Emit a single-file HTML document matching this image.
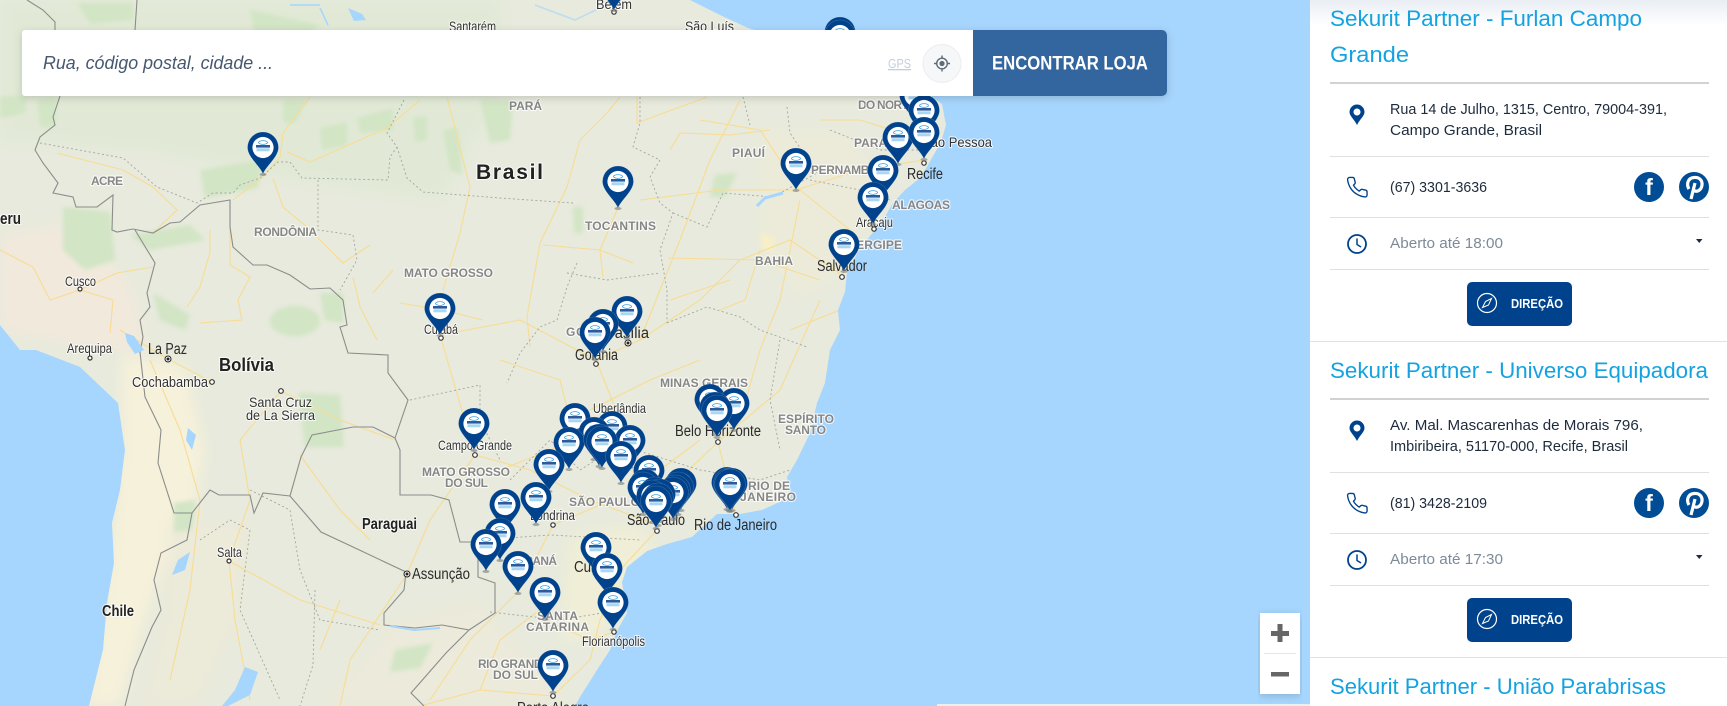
<!DOCTYPE html>
<html lang="pt"><head><meta charset="utf-8"><title>Sekurit Partner</title>
<style>
html,body{margin:0;padding:0;width:1727px;height:706px;overflow:hidden;background:#fff}
svg{display:block}
text{font-family:"Liberation Sans",sans-serif}
.c,.r,.k{paint-order:stroke;stroke:#fff;stroke-width:2.2px;stroke-opacity:.75;stroke-linejoin:round}
.c{fill:#333;font-size:14px}
.l{font-size:15.5px;fill:#2a2a2a}
.r{fill:#868686;font-size:12px;font-weight:bold}
.k{fill:#222;font-size:17px;font-weight:bold}
.t{fill:#14a3e0;font-size:22px}
.a{fill:#1d2b3c;font-size:15px}
.o{fill:#7d8a99;font-size:15px}
.d{fill:#fff;font-size:13px;font-weight:bold}
.dot{fill:#fff;stroke:#333;stroke-width:1.2}
.rd{fill:none;stroke:#f8dc93;stroke-width:1.1}
.st{fill:none;stroke:#a3a6a0;stroke-width:.9;stroke-dasharray:2 2.5}
.bd{fill:none;stroke:#8b8d8b;stroke-width:1.1}
</style></head><body>
<svg width="1727" height="706" viewBox="0 0 1727 706" xmlns="http://www.w3.org/2000/svg">
<defs>
<clipPath id="land"><path d="M0,0H690L720,15L748,28L800,42L850,60L885,78L925,92L942,104L946,125L941,142L928,165L920,178L905,190L893,203L882,222L870,236L858,252L847,272L845,292L838,310L840,330L830,350L825,383L817,403L810,433L797,460L787,477L791,497L762,510L740,514L717,514L692,537L667,544L647,551L627,567L622,582L627,613L617,631L610,650L597,670L580,697L575,706H89L103,650L107,603L114,563L112,523L120,490L125,450L118,403L80,367L36,350L20,350L0,325Z"/></clipPath>
<filter id="b1" x="-20%" y="-20%" width="140%" height="140%"><feGaussianBlur stdDeviation="2"/></filter>
<filter id="b2" x="-30%" y="-30%" width="160%" height="160%"><feGaussianBlur stdDeviation="7"/></filter>
<filter id="sh" x="-5%" y="-30%" width="110%" height="160%"><feDropShadow dx="0" dy="2" stdDeviation="4" flood-color="#000" flood-opacity=".16"/></filter>
<linearGradient id="tg" x1="0" y1="0" x2="0" y2="1"><stop offset="0" stop-color="#e9eef4"/><stop offset="1" stop-color="#fff"/></linearGradient>
<g id="p">
<ellipse cx="0" cy="0.500" rx="3.500" ry="1.500" fill="#777" fill-opacity=".6"/>
<path d="M0,0C-3,-8 -15.5,-17 -15.5,-26.5A15.5,15.5 0 1 1 15.5,-26.5C15.5,-17 3,-8 0,0Z" fill="#00438c" stroke="#fff" stroke-opacity=".22" stroke-width=".6"/>
<circle cx="0" cy="-26.5" r="10.6" fill="#fff"/>
<ellipse cx="0" cy="-31.500" rx="4.500" ry="1.800" fill="none" stroke="#1c8fd6" stroke-width=".7"/>
<rect x="-7" y="-29" width="14" height="2.600" fill="#2d5a9c"/>
<rect x="-6.500" y="-25.700" width="13" height="3" fill="#a6d8f3"/>
</g>
<g id="ph"><path d="M22 16.92v3a2 2 0 0 1-2.18 2 19.79 19.79 0 0 1-8.63-3.07 19.5 19.5 0 0 1-6-6 19.79 19.79 0 0 1-3.07-8.67A2 2 0 0 1 4.11 2h3a2 2 0 0 1 2 1.72 12.84 12.84 0 0 0 .7 2.81 2 2 0 0 1-.45 2.11L8.09 9.91a16 16 0 0 0 6 6l1.27-1.27a2 2 0 0 1 2.11-.45 12.84 12.84 0 0 0 2.81.7A2 2 0 0 1 22 16.92z" fill="none" stroke="#00438c" stroke-width="1.4" stroke-linejoin="round"/></g>
</defs>

<!-- sea -->
<rect width="1310" height="706" fill="#a6d5fd"/>
<g clip-path="url(#land)">
<rect width="1310" height="706" fill="#e7eadc"/>
<!-- tints -->
<g filter="url(#b2)">
<path d="M0,0H500V96L440,200L300,180L150,150L0,140Z" fill="#e1e9d6"/>
<path d="M0,235L60,225L130,280L150,350L100,350L0,330Z" fill="#f1e9dc"/>
<path d="M122,355L185,365L205,450L192,520L165,560L145,620L120,706H85L110,560L122,450Z" fill="#f6f1da"/>
<path d="M760,130L850,130L880,180L850,270L800,300L760,240Z" fill="#ecebda"/>
<path d="M570,535L640,525L655,548L620,590L600,640L560,640Z" fill="#f0eed7"/>
<path d="M170,520L250,520L240,620L200,706H140L165,610Z" fill="#ecead9"/>
<path d="M395,620L480,600L570,706H320Z" fill="#eceada"/>
</g>
<g filter="url(#b1)" fill="#d2e5c5">
<path d="M63,207L110,212L115,260L85,270L63,250Z"/>
<path d="M200,170L262,160L258,188L205,198Z"/>
<path d="M77,3H133V20L90,24Z"/>
<path d="M0,97L27,95L25,113L0,118Z"/>
<path d="M37,100L57,98L55,127L40,127Z"/>
<path d="M357,118L393,108V130L360,133Z"/>
<path d="M320,128L347,122V145L322,150Z"/>
<path d="M413,117H427V140L415,142Z"/>
<path d="M443,130L458,128L462,175L450,170Z"/>
<path d="M283,100H307L295,123H283Z"/>
<ellipse cx="295" cy="321" rx="25" ry="15"/>
<path d="M153,293L190,315L185,330L160,320Z"/>
<path d="M320,293H343V323L325,320Z"/>
<path d="M480,100H513L510,140L490,143Z"/>
<path d="M573,207H583V233H574Z"/>
<path d="M715,175L737,173L725,197L710,197Z"/>
<path d="M299,393L340,395L344,447L305,447Z"/>
<path d="M174,503L196,500L192,530L174,532Z"/>
<path d="M395,650L433,643L420,668L390,672Z"/>
<path d="M250,10L320,25L300,40L255,35Z"/>
<path d="M130,235L190,225L205,240L150,250Z"/>
</g>
<path d="M760,232L775,238L772,252L762,250Z" fill="#f6efc8" filter="url(#b1)"/>
<!-- roads -->
<g class="rd">
<path d="M310,97L283,133L280,157L263,177L233,200"/><path d="M287,152L310,162L387,128L420,100"/><path d="M273,178L283,207L307,227L343,263L370,245"/><path d="M447,97L470,187L460,233L443,290"/><path d="M57,153L123,170L153,187L177,210L153,233"/><path d="M210,230V252L200,287L187,307"/><path d="M230,230V265L250,277L238,300L242,320L200,323"/><path d="M353,277L360,307L377,340"/><path d="M393,270L373,293"/><path d="M400,303L442,310L483,320"/><path d="M0,250L33,267L50,300L80,290L113,300L110,333"/><path d="M80,290L117,273L153,267"/>
<path d="M440,335L520,320L596,360L640,340L700,300L740,260L790,240L842,275"/><path d="M596,360L620,420L657,500L718,442L736,515"/><path d="M718,442L780,390L820,300"/><path d="M657,530L620,570L600,620L590,660L553,696"/>
<path d="M475,455L440,335"/><path d="M475,455L530,470L590,500L657,525"/><path d="M475,455L430,520L407,574"/><path d="M553,525L600,505"/><path d="M553,525L520,590L470,640L430,700"/>
<path d="M637,97V123L707,97"/><path d="M580,140L607,113L620,97"/><path d="M580,140L567,187L540,243L527,317L530,347"/><path d="M543,245L600,250L633,263"/><path d="M617,210L600,250L603,277"/><path d="M640,200L720,190L796,190L860,170L924,160"/><path d="M700,120L760,130L800,190L850,230"/><path d="M740,100L710,160L680,240L640,340"/>
<path d="M670,150L680,133L730,135L770,130"/><path d="M668,258L760,260L820,280"/><path d="M670,300L730,280"/><path d="M720,310L745,300L760,250"/><path d="M790,330L840,310"/>
<path d="M281,391L240,440L250,500L229,561L235,620L250,700"/><path d="M212,382L168,359L120,330"/><path d="M281,391L340,420L395,440"/><path d="M229,561L300,600L380,625"/><path d="M150,360L180,430L200,500L190,590L170,680"/><path d="M407,574L350,660L340,706"/><path d="M553,696L480,690L420,706"/><path d="M553,600L500,640L480,690"/>
<path d="M300,455L340,510L370,540"/><path d="M820,120L860,120L924,140"/><path d="M800,200L780,300L760,350L740,420"/><path d="M500,360L560,380L575,440L500,470"/><path d="M700,440L660,470L620,470"/><path d="M590,410L650,380L700,360"/><path d="M340,600L320,650"/><path d="M545,620L590,640L614,632"/>
</g>
<!-- state borders -->
<g class="st">
<path d="M40,143L123,158L157,187L197,203L213,193L233,193L240,185L260,178L278,162L290,162L302,178L388,180L390,157L397,147L387,133L405,98"/>
<path d="M318,180V230L353,235L357,260L340,290"/><path d="M397,147L407,178L423,192L500,198L573,203"/>
<path d="M640,97V123L633,147L660,160L650,177L660,203L673,213L660,250L667,290L667,323"/>
<path d="M577,263L567,287L557,320L540,327L520,353L507,383"/><path d="M567,273L607,280L660,273"/><path d="M667,323L707,307L740,317L760,330L807,347"/>
<path d="M673,213L707,227L723,193L773,197L817,173"/><path d="M743,97L750,125M787,107L790,133L817,173"/>
<path d="M830,130L880,150L920,150"/><path d="M810,180L860,190L890,200"/>
<path d="M510,480L550,440L580,470L620,445L700,470L760,480L790,470"/><path d="M780,340L770,400L780,450"/><path d="M480,540L550,535L640,540"/><path d="M490,612L560,620L620,610"/>
<path d="M250,490L290,510L300,570L320,620L380,630"/><path d="M315,590L313,665L300,706"/><path d="M200,540L230,520L250,530L240,610L280,700"/><path d="M410,400L480,385L480,420L500,460"/>
</g>
<!-- country borders -->
<g class="bd">
<path d="M27,0L43,10L55,22V30M137,0L135,30M60,96L53,117L55,125L40,137L35,150L43,163L58,183L53,193L73,197L76,207H97L113,195L112,230L117,232L133,229L153,233L170,223L180,222L200,205L230,200V227L233,247L253,265H267L290,275L310,289L330,288L343,300L347,325L340,327L348,353L388,355V373L408,400L395,438L373,427H353L312,435L301,457L290,496L321,532L353,547L406,572L404,590L384,613V625L415,628L442,625L469,630L446,653L411,693L424,706"/>
<path d="M395,438L400,450V495H431L449,500L460,542H478V577L495,583V613L469,630"/>
<path d="M135,230L155,263L147,293L150,307L140,320L143,337L140,352L145,397L161,430L158,463L174,513H192L210,490L219,495H250L254,513L263,493L290,496"/>
<path d="M192,513L187,540L161,553L154,580L161,610L152,627L134,670L125,706"/>
</g>
<!-- water -->
<g fill="#a6d5fd">
<path d="M125,333L134,336L144,350L135,354L127,342Z"/><path d="M188,428L196,435L192,450L186,440Z"/><path d="M178,560L190,552L185,570L172,575Z"/>
<path d="M245,667L258,672L250,695L228,706H222L235,690Z"/><path d="M348,8L362,14L366,20L354,21Z"/>
</g>
<path d="M757,206L765,198L783,193" fill="none" stroke="#a6d5fd" stroke-width="3"/>
<path d="M440,628L414,630L390,626" fill="none" stroke="#a6d5fd" stroke-width="2"/>
<path d="M535,5L575,20L600,8L612,4" fill="none" stroke="#bcdcf0" stroke-width="1.500"/>
<path d="M290,5L320,5M320,8L328,25" fill="none" stroke="#a6d5fd" stroke-width="1.500"/>
</g>

<!-- labels -->
<text class="c" x="596" y="9" textLength="36" lengthAdjust="spacingAndGlyphs">Belém</text>
<text class="c" x="449" y="31" textLength="47" lengthAdjust="spacingAndGlyphs">Santarém</text>
<text class="c" x="685" y="31" textLength="49" lengthAdjust="spacingAndGlyphs">São Luís</text>
<text class="r" x="509" y="110" textLength="33">PARÁ</text>
<text class="k" x="476" y="179" textLength="67" style="font-size:21px">Brasil</text>
<text class="r" x="91" y="185" textLength="32">ACRE</text>
<text class="r" x="254" y="236" textLength="63">RONDÔNIA</text>
<text class="r" x="585" y="230" textLength="71">TOCANTINS</text>
<text class="r" x="732" y="157" textLength="33">PIAUÍ</text>
<text class="r" x="811" y="174" textLength="84">PERNAMBUCO</text>
<text class="r" x="854" y="147" textLength="54">PARAÍBA</text>
<text class="r" x="858" y="109" textLength="58">DO NORTE</text>
<text class="c" x="917" y="147" textLength="75" lengthAdjust="spacingAndGlyphs">João Pessoa</text>
<text class="l" x="907" y="179" textLength="36" lengthAdjust="spacingAndGlyphs">Recife</text>
<text class="r" x="892" y="209" textLength="58">ALAGOAS</text>
<text class="c" x="856" y="227" textLength="37" lengthAdjust="spacingAndGlyphs">Aracaju</text>
<text class="r" x="848" y="249" textLength="54">SERGIPE</text>
<text class="l" x="817" y="271" textLength="50" lengthAdjust="spacingAndGlyphs">Salvador</text>
<text class="r" x="755" y="265" textLength="38">BAHIA</text>
<text class="r" x="404" y="277" textLength="89">MATO GROSSO</text>
<text class="c" x="424" y="334" textLength="34" lengthAdjust="spacingAndGlyphs">Cuiabá</text>
<text class="c" x="65" y="286" textLength="31" lengthAdjust="spacingAndGlyphs">Cusco</text>
<text class="c" x="67" y="353" textLength="45" lengthAdjust="spacingAndGlyphs">Arequipa</text>
<text class="l" x="148" y="354" textLength="39" lengthAdjust="spacingAndGlyphs">La Paz</text>
<text class="k" x="219" y="371" textLength="55" lengthAdjust="spacingAndGlyphs" style="font-size:18px">Bolívia</text>
<text class="c" x="132" y="387" textLength="76" lengthAdjust="spacingAndGlyphs" style="font-size:15px">Cochabamba</text>
<text class="c" x="249" y="407" textLength="63" lengthAdjust="spacingAndGlyphs">Santa Cruz</text>
<text class="c" x="246" y="420" textLength="69" lengthAdjust="spacingAndGlyphs">de La Sierra</text>
<text class="r" x="566" y="336" textLength="42">GOIÁS</text>
<text class="l" x="600" y="338" textLength="49" lengthAdjust="spacingAndGlyphs">Brasília</text>
<text class="l" x="575" y="360" textLength="43" lengthAdjust="spacingAndGlyphs">Goiânia</text>
<text class="r" x="660" y="387" textLength="88">MINAS GERAIS</text>
<text class="r" x="778" y="423" textLength="56">ESPÍRITO</text>
<text class="r" x="785" y="434" textLength="41">SANTO</text>
<text class="l" x="675" y="436" textLength="86" lengthAdjust="spacingAndGlyphs">Belo Horizonte</text>
<text class="c" x="593" y="413" textLength="53" lengthAdjust="spacingAndGlyphs">Uberlândia</text>
<text class="c" x="438" y="450" textLength="74" lengthAdjust="spacingAndGlyphs">Campo Grande</text>
<text class="r" x="422" y="476" textLength="88">MATO GROSSO</text>
<text class="r" x="445" y="487" textLength="43">DO SUL</text>
<text class="r" x="569" y="506" textLength="71">SÃO PAULO</text>
<text class="c" x="530" y="520" textLength="45" lengthAdjust="spacingAndGlyphs">Londrina</text>
<text class="l" x="627" y="525" textLength="58" lengthAdjust="spacingAndGlyphs">São Paulo</text>
<text class="l" x="694" y="530" textLength="83" lengthAdjust="spacingAndGlyphs">Rio de Janeiro</text>
<text class="r" x="748" y="490" textLength="42">RIO DE</text>
<text class="r" x="740" y="501" textLength="56">JANEIRO</text>
<text class="k" x="362" y="529" textLength="55" lengthAdjust="spacingAndGlyphs" style="font-size:15.5px">Paraguai</text>
<text class="l" x="412" y="579" textLength="58" lengthAdjust="spacingAndGlyphs">Assunção</text>
<text class="c" x="217" y="557" textLength="25" lengthAdjust="spacingAndGlyphs">Salta</text>
<text class="k" x="102" y="616" textLength="32" lengthAdjust="spacingAndGlyphs" style="font-size:15.5px">Chile</text>
<text class="r" x="510" y="565" textLength="47">PARANÁ</text>
<text class="l" x="574" y="572" textLength="46" lengthAdjust="spacingAndGlyphs">Curitiba</text>
<text class="r" x="537" y="620" textLength="41">SANTA</text>
<text class="r" x="526" y="631" textLength="63">CATARINA</text>
<text class="c" x="582" y="646" textLength="63" lengthAdjust="spacingAndGlyphs">Florianópolis</text>
<text class="r" x="478" y="668" textLength="72">RIO GRANDE</text>
<text class="r" x="493" y="679" textLength="45">DO SUL</text>
<text class="l" x="517" y="713" textLength="72" lengthAdjust="spacingAndGlyphs">Porto Alegre</text>
<text class="k" x="-9" y="224" textLength="30" lengthAdjust="spacingAndGlyphs">Peru</text>
<!-- dots -->
<g class="dot">
<circle cx="80" cy="289" r="2"/><circle cx="90" cy="358" r="2"/><circle cx="212" cy="382" r="2.3"/><circle cx="281" cy="391" r="2.3"/><circle cx="229" cy="561" r="2"/><circle cx="475" cy="455" r="2.3"/><circle cx="553" cy="525" r="2.2"/><circle cx="614" cy="632" r="2.2"/><circle cx="553" cy="696" r="2.3"/><circle cx="657" cy="531" r="2.3"/><circle cx="736" cy="515" r="2.3"/><circle cx="718" cy="442" r="2.3"/><circle cx="596" cy="364" r="2.3"/><circle cx="441" cy="338" r="2.2"/><circle cx="842" cy="277" r="2.3"/><circle cx="874" cy="229" r="2.2"/><circle cx="924" cy="163" r="2.2"/><circle cx="614" cy="12" r="2.2"/>
</g>
<circle cx="168" cy="359" r="3" fill="#fff" stroke="#222" stroke-width="1"/><circle cx="168" cy="359" r="1.5" fill="#222"/>
<circle cx="628" cy="343" r="3" fill="#fff" stroke="#222" stroke-width="1"/><circle cx="628" cy="343" r="1.5" fill="#222"/>
<circle cx="407" cy="574" r="3" fill="#fff" stroke="#222" stroke-width="1"/><circle cx="407" cy="574" r="1.5" fill="#222"/>

<!-- pins -->
<use href="#p" x="263" y="174"/><use href="#p" x="614" y="10"/><use href="#p" x="840" y="59"/><use href="#p" x="840" y="62"/>
<use href="#p" x="796" y="190"/><use href="#p" x="915" y="122"/><use href="#p" x="924" y="137"/><use href="#p" x="898" y="164"/><use href="#p" x="924" y="159"/><use href="#p" x="883" y="197"/><use href="#p" x="873" y="224"/><use href="#p" x="844" y="271"/>
<use href="#p" x="618" y="208"/><use href="#p" x="440" y="335"/><use href="#p" x="627" y="338"/><use href="#p" x="603" y="351"/><use href="#p" x="595" y="359"/>
<use href="#p" x="710" y="426"/><use href="#p" x="734" y="430"/><use href="#p" x="715" y="434"/><use href="#p" x="717" y="437"/>
<use href="#p" x="474" y="450"/><use href="#p" x="575" y="445"/><use href="#p" x="612" y="453"/><use href="#p" x="594" y="459"/><use href="#p" x="630" y="467"/><use href="#p" x="569" y="469"/><use href="#p" x="599" y="466"/><use href="#p" x="602" y="468"/><use href="#p" x="621" y="483"/><use href="#p" x="549" y="491"/><use href="#p" x="649" y="497"/>
<use href="#p" x="505" y="531"/><use href="#p" x="500" y="560"/><use href="#p" x="536" y="524"/><use href="#p" x="486" y="571"/><use href="#p" x="518" y="593"/><use href="#p" x="545" y="619"/><use href="#p" x="596" y="574"/><use href="#p" x="607" y="595"/><use href="#p" x="613" y="629"/><use href="#p" x="553" y="692"/>
<use href="#p" x="727" y="509"/><use href="#p" x="729" y="510"/><use href="#p" x="732" y="510"/><use href="#p" x="730" y="511"/>
<use href="#p" x="645" y="511"/><use href="#p" x="643" y="514"/><use href="#p" x="681" y="510"/><use href="#p" x="678" y="514"/><use href="#p" x="675" y="517"/><use href="#p" x="673" y="519"/><use href="#p" x="655" y="519"/><use href="#p" x="660" y="521"/><use href="#p" x="652" y="522"/><use href="#p" x="658" y="525"/><use href="#p" x="656" y="528"/>

<!-- zoom control and attribution -->
<rect x="937" y="704" width="373" height="2" fill="#eee"/>
<rect x="1260" y="613" width="40" height="81" fill="#fff" filter="url(#sh)"/>
<rect x="1271" y="631" width="18" height="5" fill="#666"/><rect x="1277.5" y="624" width="5" height="18" fill="#666"/>
<rect x="1264" y="653" width="32" height="1" fill="#e6e6e6"/>
<rect x="1271" y="672" width="18" height="4.5" fill="#666"/>

<!-- search bar -->
<g filter="url(#sh)"><path d="M25,30H1162a5,5 0 0 1 5,5V91a5,5 0 0 1-5,5H25a3,3 0 0 1-3-3V33a3,3 0 0 1 3-3Z" fill="#fff"/></g>
<path d="M973,30H1162a5,5 0 0 1 5,5V91a5,5 0 0 1-5,5H973Z" fill="#33669e"/>
<text x="43" y="69" style="font-size:18px;font-style:italic;fill:#46586f" textLength="230" lengthAdjust="spacingAndGlyphs">Rua, código postal, cidade ...</text>
<text x="888" y="68" style="font-size:13px;fill:#c3cedb;text-decoration:underline" textLength="23" lengthAdjust="spacingAndGlyphs">GPS</text>
<circle cx="942" cy="63.5" r="19" fill="#f5f7f9" stroke="#e9edf1"/>
<circle cx="942" cy="63.5" r="5.3" fill="none" stroke="#5f6b78" stroke-width="1.4"/><circle cx="942" cy="63.5" r="2.6" fill="#5f6b78"/>
<path d="M942,55.5v2.5M942,69v2.5M934,63.5h2.5M947.5,63.5h2.5" stroke="#5f6b78" stroke-width="1.4"/>
<text x="992" y="69.500" style="font-size:19px;font-weight:bold;fill:#fff" textLength="156" lengthAdjust="spacingAndGlyphs">ENCONTRAR LOJA</text>

<!-- panel -->
<rect x="1310" width="417" height="706" fill="#fff"/>
<rect x="1310" width="417" height="26" fill="url(#tg)"/>
<text class="t" x="1330" y="26" textLength="312" lengthAdjust="spacingAndGlyphs">Sekurit Partner - Furlan Campo</text>
<text class="t" x="1330" y="62" textLength="79" lengthAdjust="spacingAndGlyphs">Grande</text>
<rect x="1330" y="82" width="379" height="2" fill="#d2d2d2"/>
<g>
<path d="M1357,125C1354,119 1349.500,116 1349.500,112A7.500,7.500 0 0 1 1364.500,112C1364.500,116 1360,119 1357,125ZM1357,108.500a3.500,3.500 0 1 0 .01,0Z" fill="#00438c" fill-rule="evenodd"/>
<text class="a" x="1390" y="114" textLength="277" lengthAdjust="spacingAndGlyphs">Rua 14 de Julho, 1315, Centro, 79004-391,</text>
<text class="a" x="1390" y="135" textLength="152" lengthAdjust="spacingAndGlyphs">Campo Grande, Brasil</text>
<rect x="1330" y="156" width="379" height="1" fill="#e0e0e0"/>
<use href="#ph" transform="translate(1345.500,175.500) scale(.98)"/>
<text class="a" x="1390" y="192" textLength="97" lengthAdjust="spacingAndGlyphs">(67) 3301-3636</text>
<circle cx="1649" cy="187" r="15" fill="#004d95"/><text x="1649" y="195" text-anchor="middle" style="font-size:23px;font-weight:bold;fill:#fff">f</text>
<circle cx="1694" cy="187" r="15" fill="#004d95"/><path d="M1689,189C1686,184 1688,178 1694,177.500C1700,177 1702.500,181 1702,185C1701.500,190 1697,192.500 1694,190.500M1695,183L1691,199" fill="none" stroke="#fff" stroke-width="3.200"/>
<rect x="1330" y="217" width="379" height="1" fill="#e0e0e0"/>
<circle cx="1357" cy="244" r="9" fill="none" stroke="#00438c" stroke-width="1.800"/><path d="M1357,238.500V244.500L1361,247" fill="none" stroke="#00438c" stroke-width="1.500"/>
<text class="o" x="1390" y="248" textLength="113" lengthAdjust="spacingAndGlyphs">Aberto até 18:00</text>
<path d="M1696,239H1702.500L1699.250,243Z" fill="#1d2b3c"/>
<rect x="1330" y="269" width="379" height="1" fill="#e0e0e0"/>
<rect x="1467" y="282" width="105" height="44" rx="5" fill="#00438c"/>
<circle cx="1487" cy="303" r="9.500" fill="none" stroke="#fff" stroke-width="1.200"/><path d="M1491.500,298.500L1488.500,305L1482.500,307.500L1485.500,301.500Z" fill="none" stroke="#fff" stroke-width="1"/>
<text class="d" x="1511" y="308" textLength="52" lengthAdjust="spacingAndGlyphs">DIREÇÃO</text>
</g>
<rect x="1310" y="341" width="417" height="1" fill="#dde3ea"/>

<text class="t" x="1330" y="378" textLength="378" lengthAdjust="spacingAndGlyphs">Sekurit Partner - Universo Equipadora</text>
<rect x="1330" y="398" width="379" height="2" fill="#d2d2d2"/>
<g transform="translate(0,316)">
<path d="M1357,125C1354,119 1349.500,116 1349.500,112A7.500,7.500 0 0 1 1364.500,112C1364.500,116 1360,119 1357,125ZM1357,108.500a3.500,3.500 0 1 0 .01,0Z" fill="#00438c" fill-rule="evenodd"/>
<text class="a" x="1390" y="114" textLength="253" lengthAdjust="spacingAndGlyphs">Av. Mal. Mascarenhas de Morais 796,</text>
<text class="a" x="1390" y="135" textLength="238" lengthAdjust="spacingAndGlyphs">Imbiribeira, 51170-000, Recife, Brasil</text>
<rect x="1330" y="156" width="379" height="1" fill="#e0e0e0"/>
<use href="#ph" transform="translate(1345.500,175.500) scale(.98)"/>
<text class="a" x="1390" y="192" textLength="97" lengthAdjust="spacingAndGlyphs">(81) 3428-2109</text>
<circle cx="1649" cy="187" r="15" fill="#004d95"/><text x="1649" y="195" text-anchor="middle" style="font-size:23px;font-weight:bold;fill:#fff">f</text>
<circle cx="1694" cy="187" r="15" fill="#004d95"/><path d="M1689,189C1686,184 1688,178 1694,177.500C1700,177 1702.500,181 1702,185C1701.500,190 1697,192.500 1694,190.500M1695,183L1691,199" fill="none" stroke="#fff" stroke-width="3.200"/>
<rect x="1330" y="217" width="379" height="1" fill="#e0e0e0"/>
<circle cx="1357" cy="244" r="9" fill="none" stroke="#00438c" stroke-width="1.800"/><path d="M1357,238.500V244.500L1361,247" fill="none" stroke="#00438c" stroke-width="1.500"/>
<text class="o" x="1390" y="248" textLength="113" lengthAdjust="spacingAndGlyphs">Aberto até 17:30</text>
<path d="M1696,239H1702.500L1699.250,243Z" fill="#1d2b3c"/>
<rect x="1330" y="269" width="379" height="1" fill="#e0e0e0"/>
<rect x="1467" y="282" width="105" height="44" rx="5" fill="#00438c"/>
<circle cx="1487" cy="303" r="9.500" fill="none" stroke="#fff" stroke-width="1.200"/><path d="M1491.500,298.500L1488.500,305L1482.500,307.500L1485.500,301.500Z" fill="none" stroke="#fff" stroke-width="1"/>
<text class="d" x="1511" y="308" textLength="52" lengthAdjust="spacingAndGlyphs">DIREÇÃO</text>
</g>
<rect x="1310" y="657" width="417" height="1" fill="#dde3ea"/>
<text class="t" x="1330" y="694" textLength="336" lengthAdjust="spacingAndGlyphs">Sekurit Partner - União Parabrisas</text>
</svg>
</body></html>
